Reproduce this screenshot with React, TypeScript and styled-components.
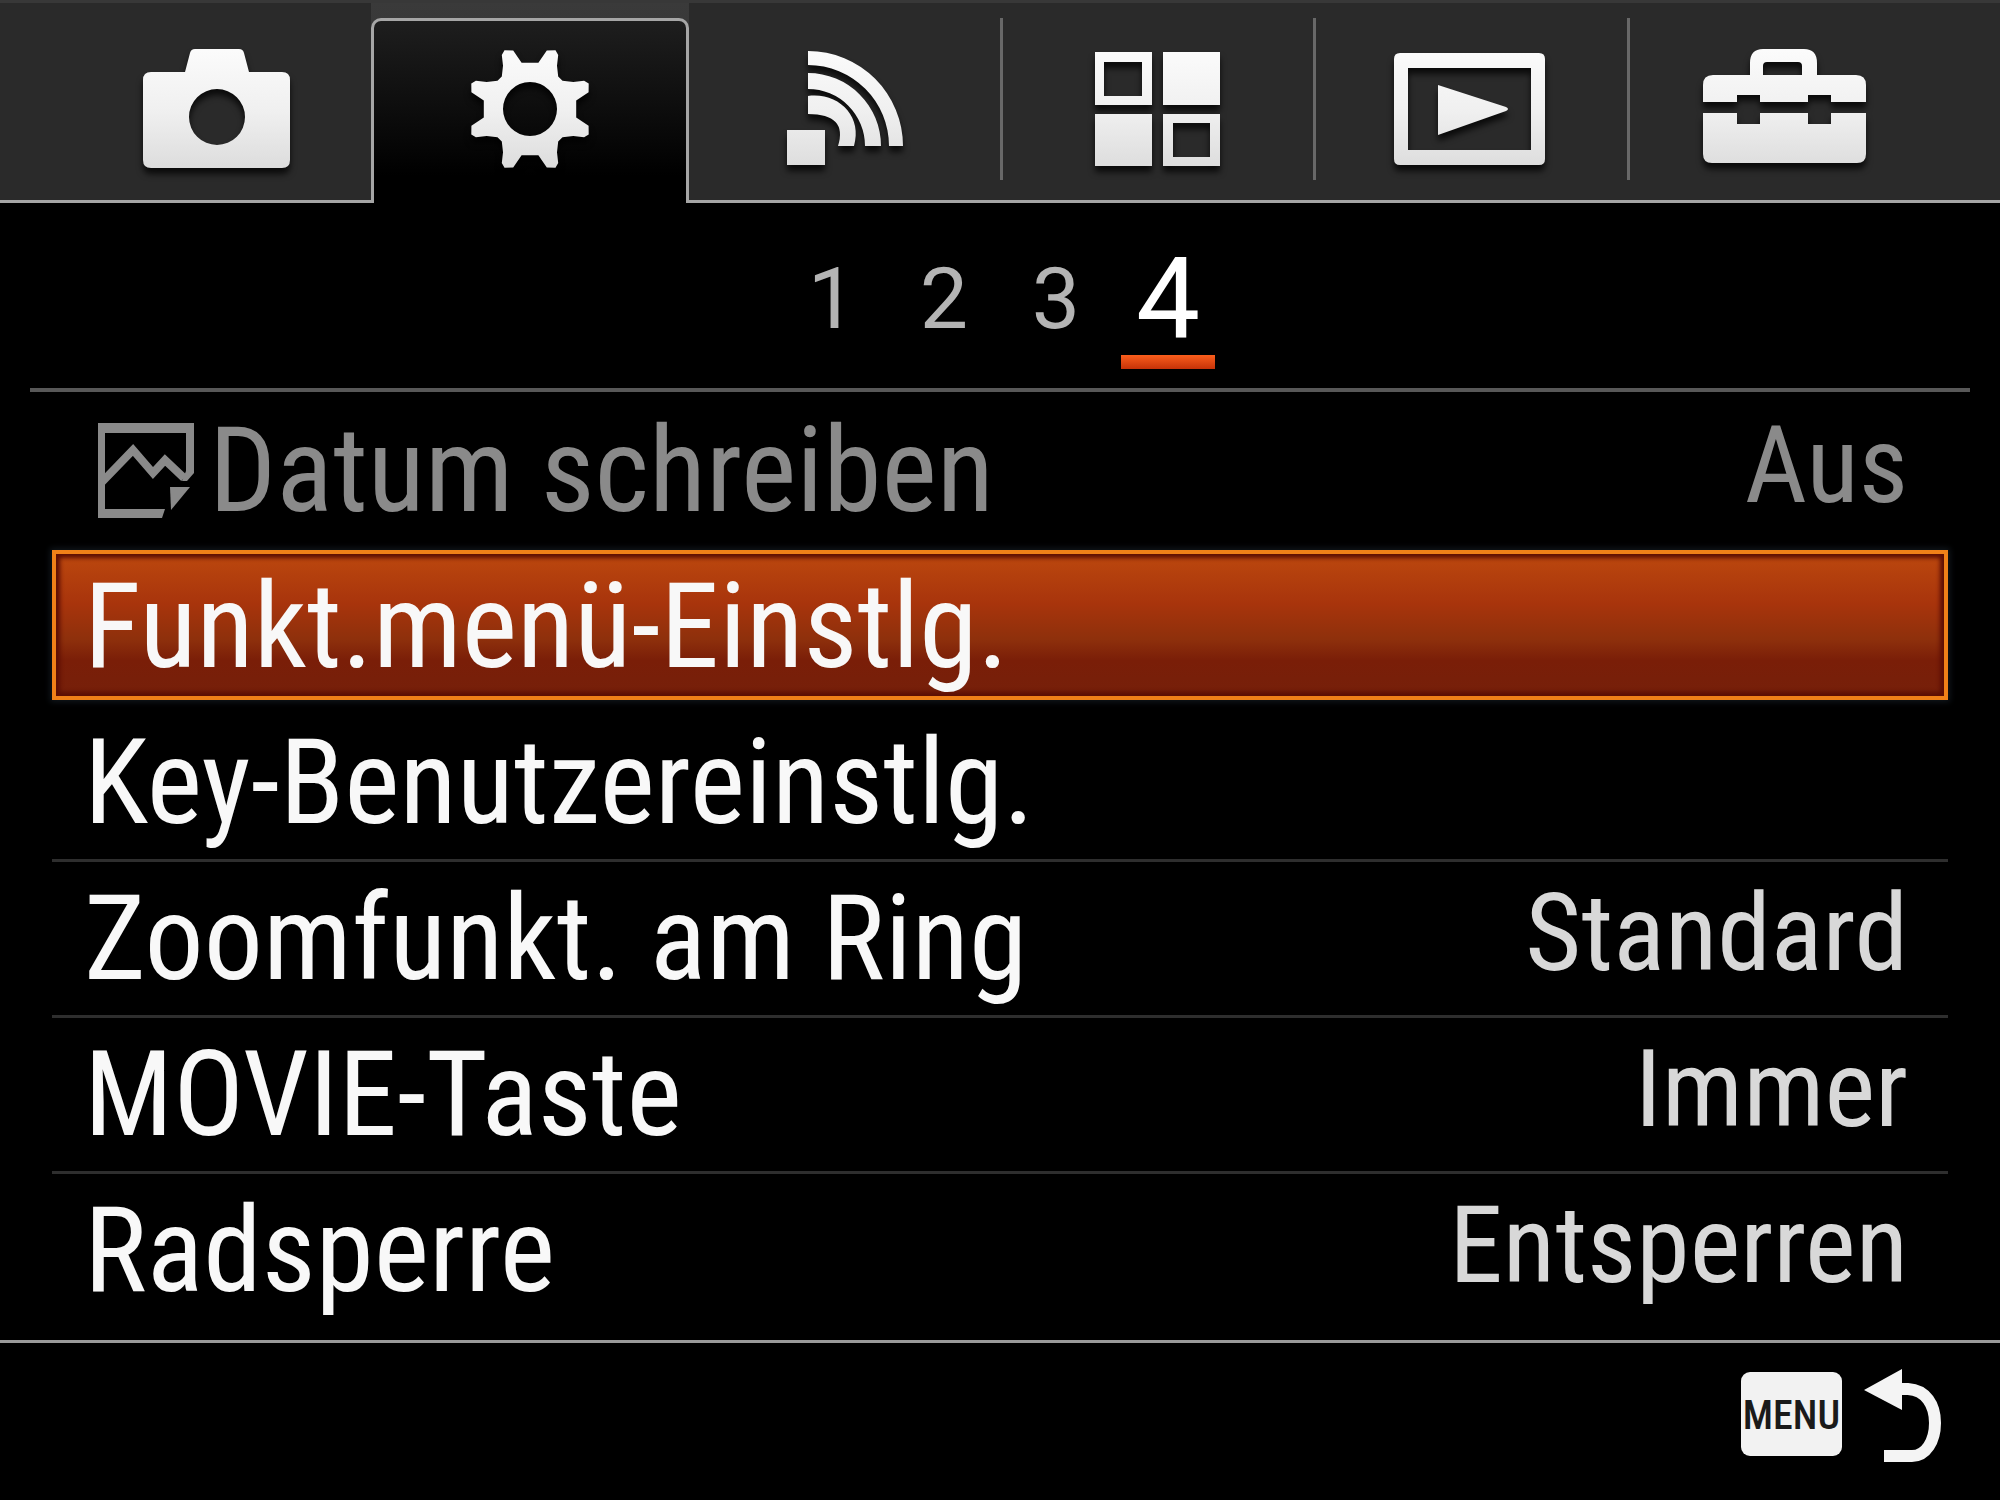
import React from "react";
import styled, { createGlobalStyle, css } from "styled-components";

const narrow = '"Roboto Condensed", Roboto, "Liberation Sans", sans-serif';
const regular = 'Roboto, "Liberation Sans", Arial, sans-serif';

const GlobalStyle = createGlobalStyle`
  *, *::before, *::after { box-sizing: border-box; }
  body { margin: 0; background: #000; }
  button { appearance: none; border: 0; margin: 0; padding: 0; background: none; color: inherit; font: inherit; cursor: pointer; }
  ul { list-style: none; margin: 0; padding: 0; }
`;

const Screen = styled.div`
  display: flex;
  flex-direction: column;
  min-height: 100vh;
  background: #000;
  color: #f8f8f8;
  font-family: ${narrow};
`;

const TabBar = styled.nav`
  display: grid;
  grid-template-columns: repeat(6, 1fr);
  height: 203px;
  padding: 0 60px;
  background: #2a2a2a;
  border-top: 3px solid #383838;
  border-bottom: 3px solid #a6a6a6;
`;

const TabCell = styled.div<{ $active: boolean }>`
  display: flex;
  padding-top: 15px;
  margin-bottom: -3px;
  ${(p) =>
    p.$active &&
    css`
      margin-left: -2px;
      margin-right: -2px;
      background: linear-gradient(#3a3a3a, #303030);
    `}
`;

const Tab = styled.button<{ $active: boolean; $divided: boolean }>`
  display: flex;
  flex: 1;
  justify-content: center;
  padding-top: 22px;
  ${(p) =>
    p.$active
      ? css`
          border: 3px solid #a6a6a6;
          border-bottom: 0;
          border-radius: 10px 10px 0 0;
          padding-top: 19px;
          background: linear-gradient(#1e1e1e, #000 85%);
        `
      : css`
          margin-bottom: 23px;
          border: solid transparent;
          border-width: 0 3px;
          border-left-color: ${p.$divided ? "#686868" : "transparent"};
        `}
`;

const TabIcon = styled.svg`
  flex: none;
  width: 180px;
  height: 140px;
  overflow: visible;
  filter: drop-shadow(0 6px 3px rgba(0, 0, 0, 0.75));
`;

const Pager = styled.nav`
  display: flex;
  justify-content: center;
  gap: 18px;
  height: 189px;
  margin: 0 30px;
  padding-top: 39px;
  border-bottom: 4px solid #585858;
  font-family: ${regular};
`;

const Page = styled.button<{ $current: boolean }>`
  width: 94px;
  height: 127px;
  padding-bottom: 14px;
  font-size: ${(p) => (p.$current ? 114 : 86)}px;
  line-height: 112px;
  color: ${(p) => (p.$current ? "#fff" : "#b4b4b4")};
  ${(p) =>
    p.$current &&
    css`
      background: linear-gradient(#fa5e1c, #c63208) bottom / 100% 14px no-repeat;
    `}
`;

const Menu = styled.ul`
  flex: 1;
  padding: 0 52px;
`;

const Row = styled.li<{ $line: boolean }>`
  height: 156px;
  padding: 2px 0 4px;
  ${(p) => p.$line && css`box-shadow: 0 2px #2e2e2e, inset 0 -1px #2e2e2e;`}
`;

const Item = styled.button<{ $selected: boolean }>`
  display: flex;
  align-items: center;
  justify-content: space-between;
  width: 100%;
  height: 150px;
  padding: 0 36px 0 28px;
  text-align: left;
  border: 4px solid transparent;
  ${(p) =>
    p.$selected &&
    css`
      border-color: #f08018;
      background: linear-gradient(#bc480e, #a8340c 35%, #8e300c 60%, #7a1e08 75%, #76200a) padding-box;
      box-shadow: inset 0 0 4px 4px #5c0e04, 0 0 6px 2px #10161c;
    `}
  &:disabled { color: #8a8a8a; cursor: default; }
`;

const Label = styled.span`
  display: flex;
  align-items: center;
  gap: 15px;
  padding-top: 4px;
  font-size: 118px;
  line-height: 138px;
  white-space: nowrap;
`;

const Value = styled.span<{ $dim: boolean }>`
  padding-bottom: 8px;
  font-size: 108px;
  line-height: 130px;
  white-space: nowrap;
  color: ${(p) => (p.$dim ? "#8a8a8a" : "#d8d8d8")};
`;

const ImageIcon = styled.svg`
  flex: none;
  width: 96px;
  height: 96px;
  margin-left: 14px;
`;

const Footer = styled.footer`
  display: flex;
  align-items: flex-start;
  justify-content: flex-end;
  height: 160px;
  padding: 26px 58px 0 0;
  border-top: 3px solid #9a9a9a;
`;

const BackButton = styled.button`
  display: flex;
  gap: 20px;
`;

const MenuKey = styled.span`
  width: 101px;
  height: 84px;
  margin-top: 3px;
  border-radius: 9px;
  background: #f2f2f2;
  color: #1a1a1a;
  font-size: 40px;
  font-weight: 500;
  line-height: 88px;
  text-align: center;
`;

const BackArrow = styled.svg`
  width: 80px;
  height: 96px;
`;

const Shade = ({ id }: { id: string }) => (
  <defs>
    <linearGradient id={id} gradientUnits="userSpaceOnUse" x1="0" y1="10" x2="0" y2="130">
      <stop offset="0" stopColor="#fbfbfb" />
      <stop offset="0.5" stopColor="#f0f0f0" />
      <stop offset="1" stopColor="#dcdcdc" />
    </linearGradient>
  </defs>
);

// Each quadrant holds two teeth that mirror each other across its diagonal.
const gearPath = (() => {
  const tooth = [
    [10.3, 47],
    [16, 61],
    [23.5, 64],
    [27.5, 61],
    [32, 51],
    [41, 43],
  ];
  const pts: string[] = [];
  const at = (deg: number, r: number) => {
    const a = (deg * Math.PI) / 180;
    pts.push(`${(90 + r * Math.sin(a)).toFixed(1)} ${(69 - r * Math.cos(a)).toFixed(1)}`);
  };
  for (let q = 0; q < 360; q += 90) {
    tooth.forEach(([deg, r]) => at(q + deg, r));
    [...tooth].reverse().forEach(([deg, r]) => at(q + 90 - deg, r));
  }
  return `M${pts.join("L")}Z M63 69a27 27 0 1 0 54 0a27 27 0 1 0 -54 0Z`;
})();

const tabs = [
  {
    id: "camera",
    name: "Kamera",
    art: (
      <path
        fillRule="evenodd"
        d="M24 32H58L63 13Q64 9 68 9H112Q116 9 117 13L122 32H155Q163 32 163 40V120Q163 128 155 128H24Q16 128 16 120V40Q16 32 24 32Z M62 77a28 28 0 1 0 56 0a28 28 0 1 0 -56 0Z"
      />
    ),
  },
  {
    id: "custom",
    name: "Benutzereinstellungen",
    art: <path fillRule="evenodd" d={gearPath} />,
  },
  {
    id: "wireless",
    name: "Drahtlos",
    art: (
      <path d="M34 90H72V125H34Z M55 11A95 95 0 0 1 150 106H136A81 81 0 0 0 55 25Z M55 33A73 73 0 0 1 128 106H112A57 57 0 0 0 55 49Z M55 56C85 52 110 76 101 106H85Q95 74 55 74Z" />
    ),
  },
  {
    id: "apps",
    name: "Applikation",
    art: (
      <path
        fillRule="evenodd"
        d="M28 12H85V65H28Z M37 22V56H75V22Z M96 12H153V65H96Z M28 74H85V126H28Z M96 74H153V126H96Z M106 83V117H143V83Z"
      />
    ),
  },
  {
    id: "playback",
    name: "Wiedergabe",
    art: (
      <path
        fillRule="evenodd"
        d="M20 13H159Q165 13 165 19V119Q165 125 159 125H20Q14 125 14 119V19Q14 13 20 13Z M28 28V110H151V28Z M58 45L126 67Q130 69 126 71L58 95Z"
      />
    ),
  },
  {
    id: "setup",
    name: "Einstellung",
    art: (
      <path
        fillRule="evenodd"
        d="M57 35V23Q57 9 70 9H111Q124 9 124 23V35H163Q173 35 173 45V62H138V55H115V62H67V55H44V62H10V45Q10 35 20 35Z M70 35H109V26Q109 22 105 22H74Q70 22 70 26Z M10 73H44V84H67V73H115V84H138V73H173V114Q173 123 164 123H19Q10 123 10 114Z"
      />
    ),
  },
];

const rows = [
  { label: "Datum schreiben", value: "Aus", disabled: true, image: true },
  { label: "Funkt.menü-Einstlg.", selected: true },
  { label: "Key-Benutzereinstlg.", line: true },
  { label: "Zoomfunkt. am Ring", value: "Standard", line: true },
  { label: "MOVIE-Taste", value: "Immer", line: true },
  { label: "Radsperre", value: "Entsperren" },
];

export default function App() {
  return (
    <Screen>
      <GlobalStyle />
      <TabBar role="tablist">
        {tabs.map((t, i) => (
          <TabCell key={t.id} $active={i === 1}>
            <Tab role="tab" aria-label={t.name} aria-selected={i === 1} $active={i === 1} $divided={i > 2}>
              <TabIcon viewBox="0 0 180 140" aria-hidden="true">
                <Shade id={`shade-${t.id}`} />
                <g fill={`url(#shade-${t.id})`}>{t.art}</g>
              </TabIcon>
            </Tab>
          </TabCell>
        ))}
      </TabBar>
      <Pager>
        {[1, 2, 3, 4].map((n) => (
          <Page key={n} $current={n === 4} aria-current={n === 4 ? "page" : undefined}>
            {n}
          </Page>
        ))}
      </Pager>
      <Menu>
        {rows.map((r) => (
          <Row key={r.label} $line={!!r.line}>
            <Item $selected={!!r.selected} disabled={r.disabled}>
              <Label>
                {r.image && (
                  <ImageIcon viewBox="0 0 96 96" aria-hidden="true">
                    <path fill="#8a8a8a" d="M0 0H96V50L89 58H84L88 48V10H7V86H67L64 95H0Z" />
                    <path fill="none" stroke="#8a8a8a" strokeWidth="8" d="M4 59L35 27L55 50L67 37L86 55" />
                    <path fill="#8a8a8a" d="M72 64H92L73 87Z" />
                  </ImageIcon>
                )}
                {r.label}
              </Label>
              {r.value && <Value $dim={!!r.disabled}>{r.value}</Value>}
            </Item>
          </Row>
        ))}
      </Menu>
      <Footer>
        <BackButton>
          <MenuKey>MENU</MenuKey>
          <BackArrow viewBox="0 0 80 96" aria-hidden="true">
            <path fill="#f4f4f4" d="M2 21L40 0V41Z" />
            <path fill="none" stroke="#f4f4f4" strokeWidth="12" d="M36 20H46C64 21 73 36 73 54C73 72 64 87 50 87H22" />
          </BackArrow>
        </BackButton>
      </Footer>
    </Screen>
  );
}
